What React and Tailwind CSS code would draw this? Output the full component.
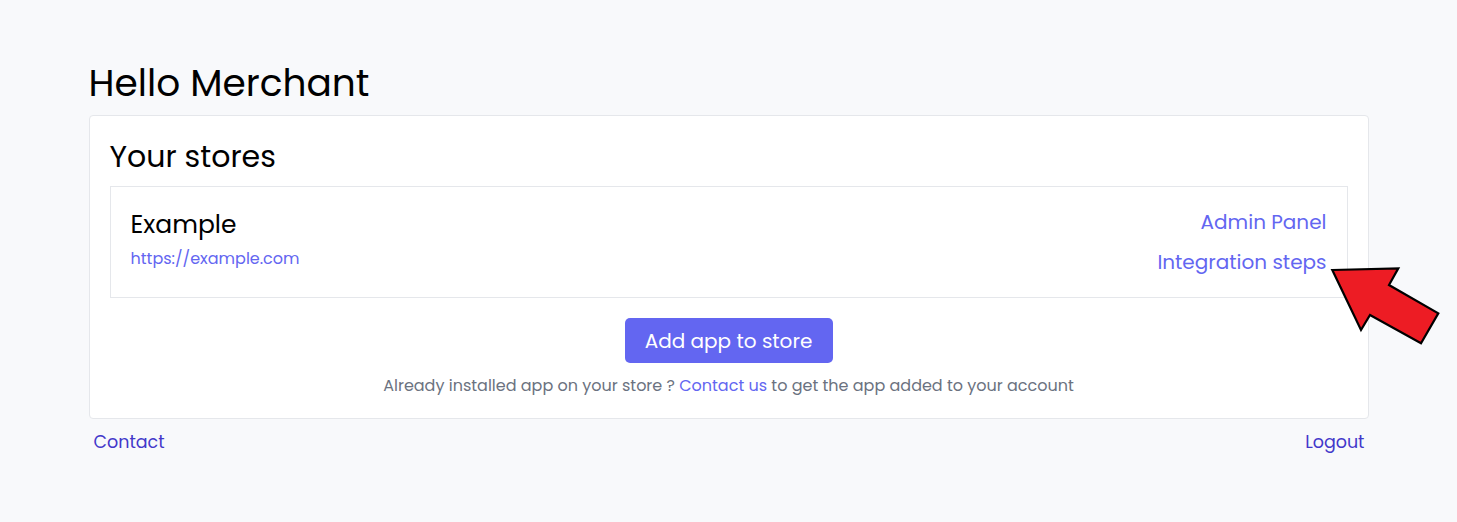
import React from "react";

function Arrow() {
  return (
    <svg
      className="absolute left-[1330px] top-[266px] pointer-events-none"
      width="112"
      height="82"
      viewBox="1330 266 112 82"
    >
      <polygon
        points="1332.3,270 1398.3,268.3 1389,285 1438.3,313.3 1421,343.3 1370,315 1361,330"
        fill="#ed1c24"
        stroke="#000"
        strokeWidth="2.2"
        strokeLinejoin="miter"
      />
    </svg>
  );
}

export default function App() {
  return (
    <div className="relative min-h-[522px] bg-[#f8f9fb] text-black">
      <div className="mx-auto w-[1280px] pt-[58px] font-['Poppins','Open_Sans','Noto_Sans',sans-serif]">
        <h1 className="text-[37.5px] leading-[50px] font-normal">Hello Merchant</h1>
        <div className="mt-[7px] rounded-[4px] border border-[#e5e7eb] bg-white px-[20px] pt-[21px] pb-[20px]">
          <h2 className="text-[30px] leading-[40px]">Your stores</h2>
          <div className="mt-[9px] flex items-start justify-between border border-[#e5e7eb] px-[20px] pt-[20px] pb-[22px]">
            <div>
              <div className="text-[25px] leading-[36px]">Example</div>
              <div className="mt-[4px] text-[16px] leading-[24px] text-[#6366f1]">https://example.com</div>
            </div>
            <div className="flex flex-col items-end gap-[14px] pt-[2px]">
              <a className="text-[20px] leading-[26px] text-[#6366f1]">Admin Panel</a>
              <a className="text-[20px] leading-[26px] text-[#6366f1]">Integration steps</a>
            </div>
          </div>
          <div className="mt-[20px] flex flex-col items-center">
            <button className="h-[45px] w-[208px] rounded-[5px] bg-[#6366f1] text-[20px] text-white">
              Add app to store
            </button>
            <p className="mt-[11px] text-[16px] leading-[24px] text-[#6b7280]">
              Already installed app on your store ? <a className="text-[#6366f1]">Contact us</a> to get the app added to your account
            </p>
          </div>
        </div>
        <div className="mt-[10px] flex justify-between pl-[5px] pr-[4px] text-[17.5px] leading-[26px] text-[#4338ca]">
          <a>Contact</a>
          <a>Logout</a>
        </div>
      </div>
      <Arrow />
    </div>
  );
}
